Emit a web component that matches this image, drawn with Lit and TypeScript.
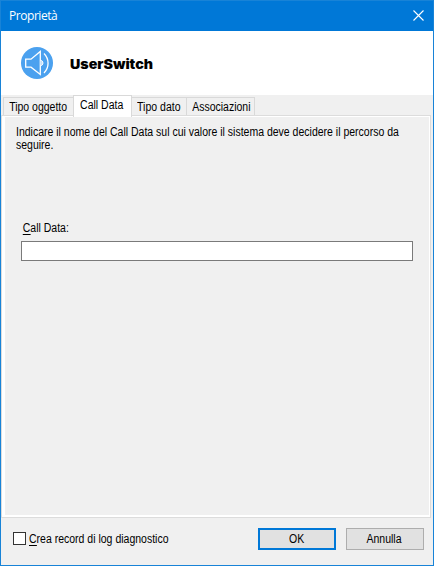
import { LitElement, html, css, svg } from "lit";
import { customElement, state } from "lit/decorators.js";

@customElement("app-root")
export class AppRoot extends LitElement {
  static styles = css`
    :host {
      display: block;
      width: 434px;
      height: 566px;
      font: 12px/13px "Liberation Sans", Arial, sans-serif;
      color: #000;
    }
    * { box-sizing: border-box; }
    .window {
      width: 434px;
      height: 566px;
      border: 1px solid #1883d7;
      background: #f0f0f0;
      display: flex;
      flex-direction: column;
      overflow: hidden;
      white-space: nowrap;
    }
    .titlebar {
      height: 30px;
      flex: none;
      background: #0078d7;
      color: #fff;
      display: flex;
      justify-content: space-between;
      padding: 7px 9px 0 8px;
      font: 12px/16px "Open Sans", "Noto Sans", sans-serif;
    }
    .title { letter-spacing: -0.45px; }
    .close { display: block; margin-top: 2px; }
    .header {
      height: 64px;
      flex: none;
      background: #fff;
      display: flex;
      padding: 16px 0 0 20px;
      gap: 17px;
    }
    .header svg { display: block; }
    .name {
      margin: 9px 0 0;
      font: 900 13.3px/17px Inter, "Liberation Sans", sans-serif;
      transform: scaleX(1.07);
      transform-origin: left;
    }
    /* condensed dialog face */
    .t {
      display: inline-block;
      transform: scaleX(0.875);
      transform-origin: left;
    }
    .tab .t, .btn .t { transform-origin: center; }
    .tabs {
      height: 20px;
      flex: none;
      display: flex;
      align-items: flex-end;
      padding-left: 2px;
    }
    .tab {
      height: 18px;
      border: 1px solid #d9d9d9;
      border-bottom: 0;
      border-left-width: 0;
      padding: 3px 0 0;
      display: flex;
      justify-content: center;
      align-items: flex-start;
      background: #f0f0f0;
      color: #000;
      font: inherit;
    }
    .tab.t0 { width: 70px; border-left-width: 1px; border-right: 0; }
    .tab.t1 { width: 59px; padding-right: 2px; }
    .tab.t2 { width: 55px; padding-right: 1px; }
    .tab.t3 { width: 68px; padding-left: 1px; }
    .tab.active {
      height: 22px;
      margin-bottom: -2px;
      border-left-width: 1px;
      background: #fff;
      z-index: 1;
    }
    .panel {
      width: 430px;
      height: 403px;
      flex: none;
      border: 1px solid #dcdcdc;
      background: #fff;
      padding: 1px 1px 2px 3px;
    }
    .content {
      height: 398px;
      background: #f0f0f0;
      padding: 9px 0 0 11px;
    }
    .hint { margin: 0; height: 96px; width: 441px; white-space: normal; display: block; }
    .field { display: flex; flex-direction: column; align-items: flex-start; padding-left: 5px; gap: 6px; }
    .field label { padding-left: 2px; }
    u { text-decoration: none; display: inline-block; height: 13px; border-bottom: 1px solid #000; line-height: 13px; }
    input.text {
      width: 392px;
      height: 20px;
      border: 1px solid #7a7a7a;
      background: #fff;
      outline: 0;
      padding: 0 3px;
      font: inherit;
    }
    .footer {
      flex: 1;
      display: flex;
      align-items: flex-start;
      padding: 10px 9px 0 12px;
    }
    .check { display: flex; gap: 3px; margin-top: 4px; flex: 1; }
    .check .t { padding-top: 1px; }
    .box { width: 13px; height: 13px; border: 1px solid #333; background: #fff; }
    .btn {
      width: 78px;
      height: 22px;
      border: 1px solid #adadad;
      background: #e1e1e1;
      color: #000;
      padding: 0 1px 0 0;
      font: inherit;
      margin-left: 10px;
    }
    .btn.default { border: 2px solid #0078d7; }
  `;

  @state() private active = 1;
  @state() private logging = false;

  private tabs = ["Tipo oggetto", "Call Data", "Tipo dato", "Associazioni"];

  private icon() {
    return svg`<svg width="32" height="32" viewBox="0 0 32 32" fill="none" stroke="#fff">
      <circle cx="16" cy="16" r="16" fill="#4ba1ef" stroke="none"></circle>
      <path d="M4.7 12.2H10L19.3 4.5V27.5L10 20.2H4.7Z" stroke-width="1.3"></path>
      <path d="M19.3 13.2C22.8 13.2 22.8 18.8 19.3 18.8" fill="#c5e0fa" stroke-width="1"></path>
      <path d="M23 6.5C28.4 12 28.4 20.5 23 26" stroke-width="1.3"></path>
    </svg>`;
  }

  render() {
    return html`
      <div class="window">
        <div class="titlebar">
          <span class="title">Proprietà</span>
          <svg class="close" width="11" height="11" viewBox="0 0 11 11" stroke="#fff" stroke-width="1.1">
            <path d="M.5 .5L10.5 10.5M10.5 .5L.5 10.5"></path>
          </svg>
        </div>
        <div class="header">
          ${this.icon()}
          <h1 class="name">UserSwitch</h1>
        </div>
        <div class="tabs">
          ${this.tabs.map(
            (t, i) => html`<button
              class="tab t${i} ${i === this.active ? "active" : ""}"
              @click=${() => (this.active = i)}
            ><span class="t">${t}</span></button>`
          )}
        </div>
        <div class="panel">
          <div class="content">
            <p class="hint t">
              Indicare il nome del Call Data sul cui valore il sistema deve decidere il percorso da
              seguire.
            </p>
            <div class="field">
              <label class="t"><u>C</u>all Data:</label>
              <input class="text" type="text" />
            </div>
          </div>
        </div>
        <div class="footer">
          <div class="check" @click=${() => (this.logging = !this.logging)}>
            <span class="box"></span>
            <span class="t"><u>C</u>rea record di log diagnostico</span>
          </div>
          <button class="btn default"><span class="t">OK</span></button>
          <button class="btn"><span class="t">Annulla</span></button>
        </div>
      </div>
    `;
  }
}
